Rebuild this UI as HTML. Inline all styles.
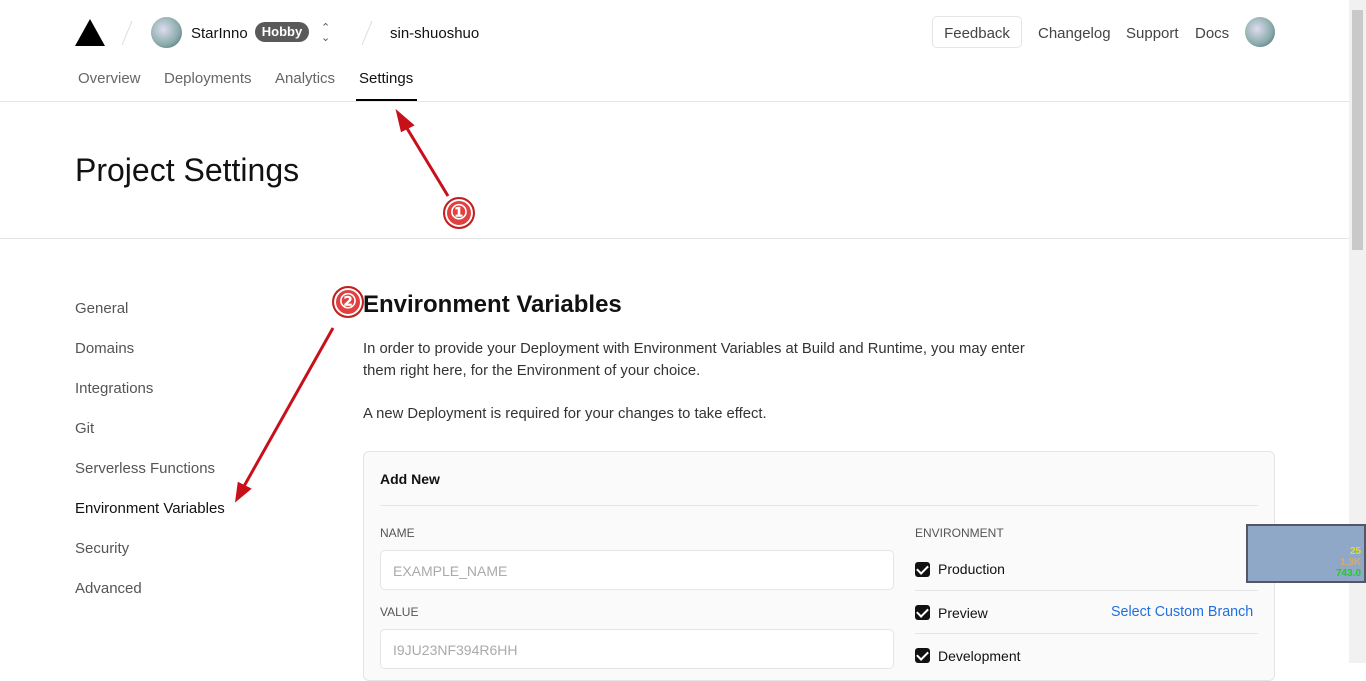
<!DOCTYPE html>
<html><head><meta charset="utf-8"><style>
*{box-sizing:border-box;margin:0;padding:0}
body{width:1366px;height:663px;overflow:hidden;font-family:"Liberation Sans",sans-serif;background:#fff;color:#111;position:relative}
.a{position:absolute;white-space:nowrap}
.g{color:#666}
.sb{position:absolute;right:0;top:0;width:17px;height:663px;background:#f1f1f1}
.sb div{position:absolute;left:3px;top:10px;width:11px;height:240px;background:#c9c9c9}
.chk{position:absolute;width:15px;height:15px;background:#111;border-radius:3px}
.chk:after{content:"";position:absolute;left:4px;top:1px;width:5px;height:9px;border:solid #fff;border-width:0 2px 2px 0;transform:rotate(45deg)}
.inp{position:absolute;left:380px;width:514px;height:40px;border:1px solid #e5e5e5;border-radius:5px;color:#aaa;font-size:14px;padding:12px 12px}
.circ{position:absolute;width:32px;height:32px;border-radius:50%;background:#e04040;border:2px solid #c02020;color:#fff;font-size:20px;font-weight:bold;text-align:center;line-height:28px;box-shadow:inset 0 0 0 2px #fff}
</style></head><body>
<svg class="a" style="left:75px;top:19px" width="30" height="27"><polygon points="15,0 30,27 0,27" fill="#000"/></svg>
<svg class="a" style="left:118px;top:18px" width="20" height="30"><line x1="14" y1="3" x2="4" y2="27" stroke="#ddd"/></svg>
<div class="a" style="left:151px;top:17px;width:31px;height:31px;border-radius:50%;background:radial-gradient(circle at 40% 40%,#dde,#8aa 60%,#456)"></div>
<div class="a" style="left:191px;top:25px;font-size:15px">StarInno</div>
<div class="a" style="left:255px;top:22px;width:54px;height:20px;border-radius:10px;background:#5a5a5a;color:#fff;font-size:13px;font-weight:bold;text-align:center;line-height:20px">Hobby</div>
<div class="a" style="left:321px;top:23px;font-size:11px;color:#555;line-height:10px">⌃<br>⌄</div>
<svg class="a" style="left:358px;top:18px" width="20" height="30"><line x1="14" y1="3" x2="4" y2="27" stroke="#ddd"/></svg>
<div class="a" style="left:390px;top:25px;font-size:15px">sin-shuoshuo</div>
<div class="a" style="left:932px;top:16px;width:90px;height:32px;border:1px solid #e5e5e5;border-radius:5px;text-align:center;line-height:32px;font-size:15px;color:#444;padding-top:1px">Feedback</div>
<div class="a g" style="left:1038px;top:25px;font-size:15px;color:#444">Changelog</div>
<div class="a g" style="left:1126px;top:25px;font-size:15px;color:#444">Support</div>
<div class="a g" style="left:1195px;top:25px;font-size:15px;color:#444">Docs</div>
<div class="a" style="left:1245px;top:17px;width:30px;height:30px;border-radius:50%;background:radial-gradient(circle at 40% 40%,#dde,#8aa 60%,#456)"></div>
<div class="a g" style="left:78px;top:70px;font-size:15px">Overview</div>
<div class="a g" style="left:164px;top:70px;font-size:15px">Deployments</div>
<div class="a g" style="left:275px;top:70px;font-size:15px">Analytics</div>
<div class="a" style="left:359px;top:70px;font-size:15px">Settings</div>
<div class="a" style="left:356px;top:99px;width:61px;height:2px;background:#000"></div>
<div class="a" style="left:0;top:101px;width:1349px;height:1px;background:#e5e5e5"></div>
<div class="a" style="left:75px;top:152px;font-size:32px">Project Settings</div>
<div class="a" style="left:0;top:238px;width:1349px;height:1px;background:#e5e5e5"></div>
<div class="a g" style="left:75px;top:289px;font-size:15px;line-height:40px;color:#555">General<br>Domains<br>Integrations<br>Git<br>Serverless Functions<br><span style="color:#111">Environment Variables</span><br>Security<br>Advanced</div>
<div class="a" style="left:363px;top:291px;font-size:24px;font-weight:bold">Environment Variables</div>
<div class="a" style="left:363px;top:338px;font-size:14.8px;line-height:22px;color:#333">In order to provide your Deployment with Environment Variables at Build and Runtime, you may enter<br>them right here, for the Environment of your choice.</div>
<div class="a" style="left:363px;top:406px;font-size:14.8px;color:#333">A new Deployment is required for your changes to take effect.</div>
<div class="a" style="left:363px;top:451px;width:912px;height:230px;border:1px solid #e5e5e5;border-radius:6px;background:#fafafa"></div>
<div class="a" style="left:380px;top:471px;font-size:14px;font-weight:bold">Add New</div>
<div class="a" style="left:380px;top:505px;width:878px;height:1px;background:#e5e5e5"></div>
<div class="a" style="left:380px;top:526px;font-size:12px;color:#555">NAME</div>
<div class="inp" style="top:550px;background:#fff">EXAMPLE_NAME</div>
<div class="a" style="left:380px;top:605px;font-size:12px;color:#555">VALUE</div>
<div class="inp" style="top:629px;background:#fff">I9JU23NF394R6HH</div>
<div class="a" style="left:915px;top:526px;font-size:12px;color:#555">ENVIRONMENT</div>
<div class="chk" style="left:915px;top:562px"></div><div class="a" style="left:938px;top:561px;font-size:14px">Production</div>
<div class="a" style="left:915px;top:590px;width:343px;height:1px;background:#e5e5e5"></div>
<div class="chk" style="left:915px;top:605px"></div><div class="a" style="left:938px;top:605px;font-size:14px">Preview</div>
<div class="a" style="left:1111px;top:604px;font-size:14.3px;color:#2070e0">Select Custom Branch</div>
<div class="a" style="left:915px;top:633px;width:343px;height:1px;background:#e5e5e5"></div>
<div class="chk" style="left:915px;top:648px"></div><div class="a" style="left:938px;top:648px;font-size:14px">Development</div>
<svg class="a" style="left:0;top:0" width="1366" height="663"><g stroke="#c8101a" stroke-width="3" fill="#c8101a"><line x1="448" y1="196" x2="405" y2="125"/><polygon points="398,113 412,125 402,130"/><line x1="333" y1="328" x2="243" y2="488"/><polygon points="237,499 239,484 249,489"/></g></svg>
<div class="circ" style="left:443px;top:197px">①</div>
<div class="circ" style="left:332px;top:286px">②</div>
<div class="sb"><div></div></div>
<div class="a" style="left:1246px;top:524px;width:120px;height:59px;background:#90a8c8;border:2px solid #556;z-index:5"></div>
<div class="a" style="left:1336px;top:568px;font-size:10px;color:#2c2;font-weight:bold;z-index:6">743.0</div>
<div class="a" style="left:1350px;top:546px;font-size:10px;color:#dd2;font-weight:bold;z-index:6">25</div>
<div class="a" style="left:1340px;top:557px;font-size:10px;color:#da6;font-weight:bold;z-index:6">1.3K</div>
</body></html>
